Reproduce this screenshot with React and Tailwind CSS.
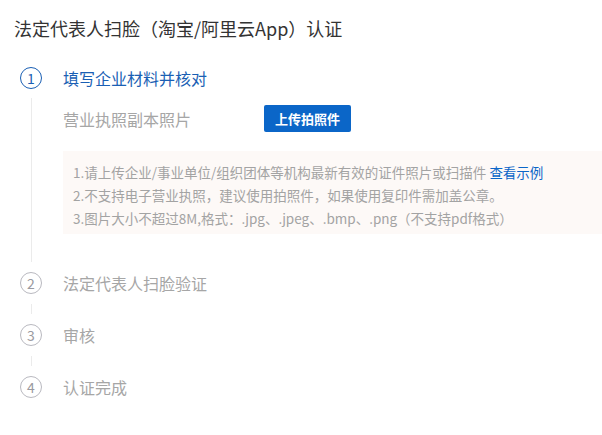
const font = { fontFamily: '"Noto Sans CJK SC", "Noto Sans", sans-serif' }

const steps = [
  { n: 1, title: '填写企业材料并核对', active: true },
  { n: 2, title: '法定代表人扫脸验证' },
  { n: 3, title: '审核' },
  { n: 4, title: '认证完成' },
]

function StepCircle({ n, active }) {
  return (
    <div
      className={`w-[22px] h-[22px] rounded-full border flex items-center justify-center text-[14px] leading-none ${
        active ? 'border-[#1a5fb4] text-[#1a5fb4]' : 'border-[#b9b9c0] text-[#9a9aa0]'
      }`}
    >
      {n}
    </div>
  )
}

function UploadBlock() {
  return (
    <div className="pt-[16px] pb-[38px]">
      <div className="flex items-center h-[27px]">
        <span className="w-[201px] text-[16px] text-[#a6a6a6]">营业执照副本照片</span>
        <button className="h-[27px] px-[11px] bg-[#0b66c8] text-white text-[13px] font-bold rounded-[2px]">
          上传拍照件
        </button>
      </div>
      <div className="mt-[19px] h-[83px] bg-[#fdf9f7] pl-[10px] pt-[10px] text-[13.5px] leading-[23px] text-[#a3a3a3]">
        <p>
          1.请上传企业/事业单位/组织团体等机构最新有效的证件照片或扫描件{' '}
          <span className="text-[#0b66c8]">查看示例</span>
        </p>
        <p>2.不支持电子营业执照，建议使用拍照件，如果使用复印件需加盖公章。</p>
        <p>3.图片大小不超过8M,格式：.jpg、.jpeg、.bmp、.png（不支持pdf格式）</p>
      </div>
    </div>
  )
}

export default function App() {
  return (
    <div className="w-[602px] h-[435px] bg-white overflow-hidden" style={font}>
      <h1 className="pl-[14px] pt-[16px] text-[18px] leading-[24px] text-[#333]">
        法定代表人扫脸（淘宝/阿里云App）认证
      </h1>
      <div className="mt-[27px] pl-[20px]">
        {steps.map((s, i) => (
          <div key={s.n} className="flex">
            <div className="w-[22px] flex flex-col items-center">
              <StepCircle n={s.n} active={s.active} />
              {i < steps.length - 1 && (
                <div
                  className={`w-px flex-1 bg-[#ebebeb] ${
                    s.active ? 'mt-[9px] mb-[10px]' : 'my-[10px]'
                  }`}
                />
              )}
            </div>
            <div className="flex-1 pl-[21px]">
              <div
                className={`h-[22px] flex items-center text-[16px] ${
                  s.active ? 'text-[#1a5fb4]' : 'text-[#a6a6a6]'
                }`}
              >
                {s.title}
              </div>
              {s.active ? <UploadBlock /> : i < steps.length - 1 && <div className="h-[30px]" />}
            </div>
          </div>
        ))}
      </div>
    </div>
  )
}
